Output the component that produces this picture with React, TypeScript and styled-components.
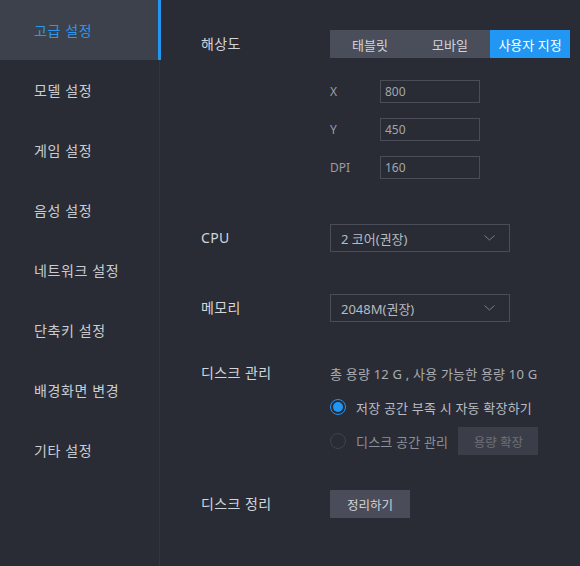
import React, { useState } from "react";
import styled, { createGlobalStyle, css } from "styled-components";

const GlobalStyle = createGlobalStyle`
  html, body {
    margin: 0;
    padding: 0;
    background: #292c35;
  }
  body {
    font-family: "Noto Sans", "Noto Sans CJK KR", sans-serif;
    font-size: 13px;
  }
`;

const Page = styled.div`
  display: flex;
  width: 580px;
  height: 566px;
  background: #292c35;
  overflow: hidden;
`;

const Sidebar = styled.nav`
  width: 159px;
  flex-shrink: 0;
  border-right: 1px solid #33363f;
  display: flex;
  flex-direction: column;
`;

const NavItem = styled.div<{ $active?: boolean }>`
  position: relative;
  height: 60px;
  display: flex;
  align-items: center;
  padding-left: 34px;
  font-size: 14px;
  letter-spacing: 0.6px;
  color: #c9ccd2;
  cursor: pointer;
  ${(p) =>
    p.$active &&
    css`
      background: #3d414b;
      color: #2d95ec;
      &::after {
        content: "";
        position: absolute;
        right: -2px;
        top: 0;
        width: 3px;
        height: 60px;
        background: #2196f3;
      }
    `}
`;

const Content = styled.div`
  flex: 1;
  padding: 30px 0 0 41px;
  display: flex;
  flex-direction: column;
`;

const Row = styled.div<{ $top?: number; $align?: string }>`
  display: flex;
  align-items: ${(p) => p.$align || "center"};
  margin-top: ${(p) => p.$top || 0}px;
`;

const Label = styled.div`
  width: 129px;
  flex-shrink: 0;
  color: #d2d5da;
  font-size: 14px;
  letter-spacing: 0.4px;
  line-height: 20px;
`;

const Segmented = styled.div`
  display: flex;
  background: #4a4e5a;
  height: 28px;
`;

const Segment = styled.div<{ $active?: boolean }>`
  width: 80px;
  display: flex;
  align-items: center;
  justify-content: center;
  color: #d2d5da;
  font-size: 13px;
  cursor: pointer;
  ${(p) =>
    p.$active &&
    css`
      background: #2196f3;
      color: #ffffff;
    `}
`;

const SubGrid = styled.div`
  display: flex;
  flex-direction: column;
  gap: 15px;
  margin: 22px 0 0 129px;
`;

const SubRow = styled.div`
  display: flex;
  align-items: center;
`;

const SubLabel = styled.div`
  width: 50px;
  color: #9a9ea6;
  font-size: 12px;
`;

const NumInput = styled.input`
  box-sizing: border-box;
  width: 100px;
  height: 23px;
  background: transparent;
  border: 1px solid #4a4d57;
  color: #a3a6ad;
  font-family: "Noto Sans", "Noto Sans CJK KR", sans-serif;
  font-size: 12px;
  padding: 0 4px;
  outline: none;
`;

const Select = styled.div`
  box-sizing: border-box;
  width: 180px;
  height: 28px;
  border: 1px solid #4a4d57;
  display: flex;
  align-items: center;
  justify-content: space-between;
  padding: 0 14px 0 10px;
  color: #b7bac1;
  font-size: 13px;
`;

const Column = styled.div`
  display: flex;
  flex-direction: column;
`;

const Info = styled.div`
  height: 20px;
  display: flex;
  align-items: center;
  color: #a9acb3;
  font-size: 13px;
  letter-spacing: 0.2px;
`;

const RadioRow = styled.div<{ $top?: number }>`
  display: flex;
  align-items: center;
  height: 28px;
  margin-top: ${(p) => p.$top || 0}px;
`;

const Radio = styled.span<{ $checked?: boolean }>`
  box-sizing: border-box;
  width: 16px;
  height: 16px;
  border-radius: 50%;
  border: 1px solid ${(p) => (p.$checked ? "#2196f3" : "#40434c")};
  display: flex;
  align-items: center;
  justify-content: center;
  margin-right: 10px;
  &::after {
    content: "";
    width: 10px;
    height: 10px;
    border-radius: 50%;
    background: ${(p) => (p.$checked ? "#2196f3" : "transparent")};
  }
`;

const RadioText = styled.span<{ $dim?: boolean }>`
  color: ${(p) => (p.$dim ? "#8c8f96" : "#b9bcc3")};
  font-size: 13px;
  letter-spacing: 0.2px;
`;

const Button = styled.button<{ $disabled?: boolean; $gap?: number }>`
  width: 80px;
  height: 28px;
  border: none;
  margin-left: ${(p) => p.$gap || 0}px;
  background: ${(p) => (p.$disabled ? "#3b3e48" : "#4a4d59")};
  color: ${(p) => (p.$disabled ? "#6d7078" : "#d2d5da")};
  font-family: "Noto Sans", "Noto Sans CJK KR", sans-serif;
  font-size: 12.5px;
  padding: 0;
  cursor: pointer;
`;

const Chevron = () => (
  <svg width="11" height="6" viewBox="0 0 11 6">
    <path d="M0.5 0.5 L5.5 5 L10.5 0.5" fill="none" stroke="#7a7d86" strokeWidth="1" />
  </svg>
);

const navItems = [
  "고급 설정",
  "모델 설정",
  "게임 설정",
  "음성 설정",
  "네트워크 설정",
  "단축키 설정",
  "배경화면 변경",
  "기타 설정",
];

const App: React.FC = () => {
  const [res, setRes] = useState(2);
  const [auto, setAuto] = useState(true);

  return (
    <Page>
      <GlobalStyle />
      <Sidebar>
        {navItems.map((n, i) => (
          <NavItem key={n} $active={i === 0}>
            {n}
          </NavItem>
        ))}
      </Sidebar>
      <Content>
        <Row>
          <Label>해상도</Label>
          <Segmented>
            {["태블릿", "모바일", "사용자 지정"].map((s, i) => (
              <Segment key={s} $active={res === i} onClick={() => setRes(i)}>
                {s}
              </Segment>
            ))}
          </Segmented>
        </Row>
        <SubGrid>
          <SubRow>
            <SubLabel>X</SubLabel>
            <NumInput defaultValue="800" />
          </SubRow>
          <SubRow>
            <SubLabel>Y</SubLabel>
            <NumInput defaultValue="450" />
          </SubRow>
          <SubRow>
            <SubLabel>DPI</SubLabel>
            <NumInput defaultValue="160" />
          </SubRow>
        </SubGrid>
        <Row $top={45}>
          <Label>CPU</Label>
          <Select>
            2 코어(권장)
            <Chevron />
          </Select>
        </Row>
        <Row $top={42}>
          <Label>메모리</Label>
          <Select>
            2048M(권장)
            <Chevron />
          </Select>
        </Row>
        <Row $top={41} $align="flex-start">
          <Label>디스크 관리</Label>
          <Column>
            <Info>총 용량 12 G , 사용 가능한 용량 10 G</Info>
            <RadioRow $top={10} onClick={() => setAuto(true)}>
              <Radio $checked={auto} />
              <RadioText $dim={!auto}>저장 공간 부족 시 자동 확장하기</RadioText>
            </RadioRow>
            <RadioRow $top={6}>
              <Radio $checked={!auto} onClick={() => setAuto(false)} />
              <RadioText $dim={auto}>디스크 공간 관리</RadioText>
              <Button $disabled={auto} $gap={10}>
                용량 확장
              </Button>
            </RadioRow>
          </Column>
        </Row>
        <Row $top={35}>
          <Label>디스크 정리</Label>
          <Button>정리하기</Button>
        </Row>
      </Content>
    </Page>
  );
};

export default App;
